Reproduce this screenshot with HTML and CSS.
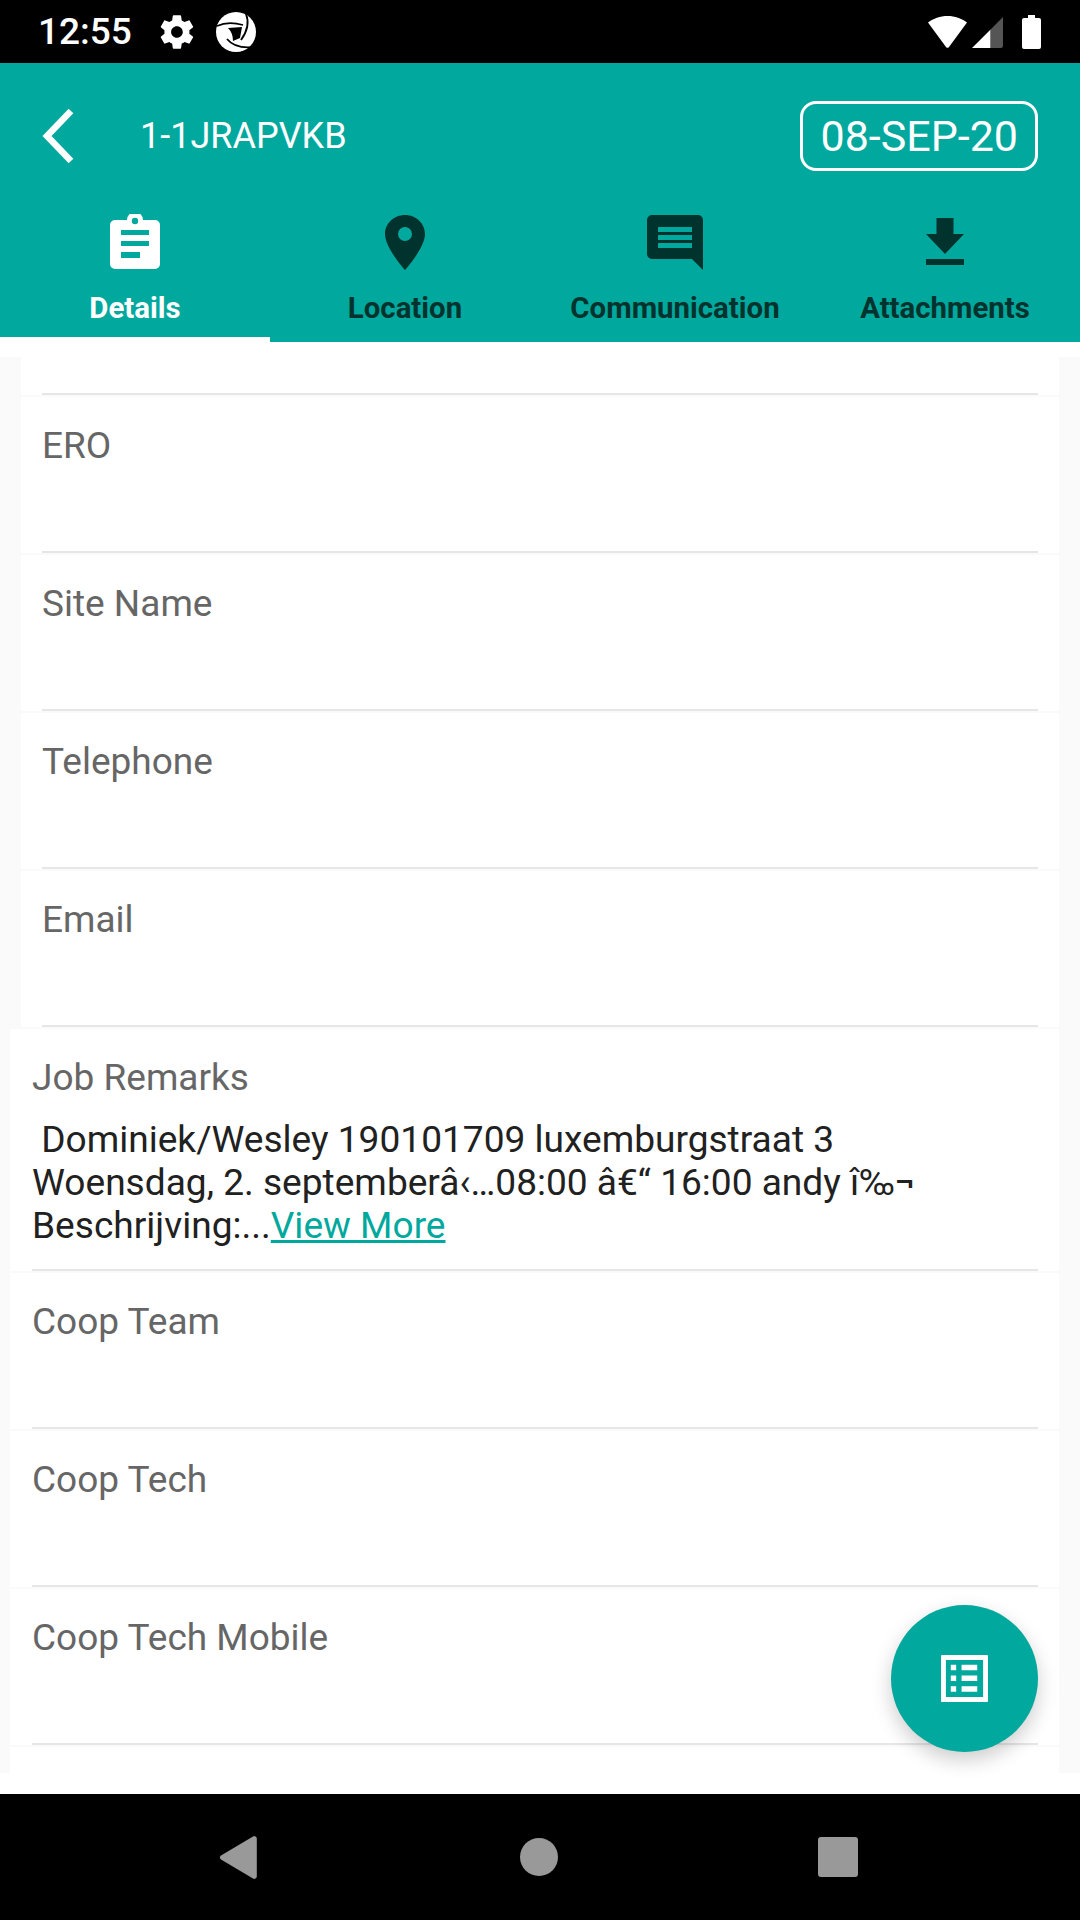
FILE: index.html
```html
<!DOCTYPE html>
<html lang="en">
<head>
  <meta charset="UTF-8" />
  <meta name="viewport" content="width=device-width, initial-scale=1.0"/>
  <title>Job Details</title>
  <link rel="stylesheet" href="styles.css">
</head>
<body>
  <div id="statusbar">
    <span class="clock">12:55</span>
    <svg class="st-gear" viewBox="0 0 24 24"><path fill="#fff" d="M19.4 13c.04-.32.07-.66.07-1s-.03-.68-.07-1l2.1-1.65c.2-.15.25-.42.12-.64l-2-3.46c-.12-.22-.39-.3-.61-.22l-2.49 1c-.52-.4-1.08-.73-1.69-.98l-.38-2.65C14.4 2.17 14.2 2 13.96 2h-4c-.25 0-.45.17-.49.42l-.38 2.65c-.61.25-1.17.59-1.69.98l-2.49-1c-.23-.09-.49 0-.61.22l-2 3.46c-.13.22-.07.49.12.64L4.52 11c-.04.32-.07.65-.07 1s.03.68.07 1l-2.1 1.65c-.2.15-.25.42-.12.64l2 3.46c.12.22.39.3.61.22l2.49-1c.52.4 1.08.73 1.69.98l.38 2.65c.04.25.24.42.49.42h4c.25 0 .45-.17.49-.42l.38-2.65c.61-.25 1.17-.59 1.69-.98l2.49 1c.23.09.49 0 .61-.22l2-3.46c.12-.22.07-.49-.12-.64L19.4 13zM11.96 15.5c-1.93 0-3.5-1.57-3.5-3.5s1.57-3.5 3.5-3.5 3.5 1.57 3.5 3.5-1.57 3.5-3.5 3.5z"/></svg>
    <svg class="st-logo" viewBox="0 0 40 40">
      <circle cx="20" cy="20" r="20" fill="#fff"/>
      <path fill="none" stroke="#000" stroke-width="1.8" d="M1 14 Q12 9 27 13 M30 2 Q35 14 25 28 M11 27 Q19 37 38 35"/>
      <path fill="#000" d="M12 16 L26 15 L24 26 L17 29 Q17 21 12 16 Z"/>
    </svg>
    <span class="st-space"></span>
    <svg class="st-wifi" viewBox="0 0 39 32"><path fill="#fff" d="M19.5 0C12 0 5.500 2.500 0 6.500L18 31a2 2 0 0 0 3 0L39 6.500C33.500 2.500 27 0 19.500 0z"/></svg>
    <svg class="st-signal" viewBox="0 0 30 31">
      <path fill="#fff" d="M0 31 L18 13 V31 Z"/>
      <path fill="#555" d="M18 13 L30 1 V29 a2 2 0 0 1 -2 2 H18 Z"/>
    </svg>
    <svg class="st-batt" viewBox="0 0 19 34"><path fill="#fff" d="M6 0h7v3h4a2 2 0 0 1 2 2v27a2 2 0 0 1-2 2H2a2 2 0 0 1-2-2V5a2 2 0 0 1 2-2h4z"/></svg>
  </div>

  <header id="topbar">
    <div class="title-row">
      <svg class="back" viewBox="0 0 32 56"><path fill="none" stroke="#fff" stroke-width="6.500" d="M29 3 L5 28 L29 53"/></svg>
      <span class="job-id">1-1JRAPVKB</span>
      <span class="date-chip">08-SEP-20</span>
    </div>
    <nav class="tabs">
      <a class="tab active">
        <svg viewBox="0 0 56 56"><path fill="currentColor" fill-rule="evenodd" d="M8 6h12a8 8 0 0 1 16 0h12a5 5 0 0 1 5 5v39a5 5 0 0 1-5 5H8a5 5 0 0 1-5-5V11a5 5 0 0 1 5-5zM28 3.800a3.200 3.200 0 1 0 0 6.400 3.200 3.200 0 0 0 0-6.400zM14 16v5h28v-5zM14 27v5h28v-5zM14 38v6h19v-6z"/></svg>
        <span>Details</span>
      </a>
      <a class="tab">
        <svg viewBox="0 0 56 56"><path fill="currentColor" fill-rule="evenodd" d="M28 1C17 1 8 9.500 8 20c0 14 20 36 20 36s20-22 20-36C48 9.500 39 1 28 1zM28 13a7 7 0 1 1 0 14 7 7 0 0 1 0-14z"/></svg>
        <span>Location</span>
      </a>
      <a class="tab">
        <svg viewBox="0 0 56 56"><path fill="currentColor" fill-rule="evenodd" d="M5 1h46a5 5 0 0 1 5 5v50L45 45H5a5 5 0 0 1-5-5V6a5 5 0 0 1 5-5zM11 13v5h34v-5zM11 21v5h34v-5zM11 29v5h34v-5z"/></svg>
        <span>Communication</span>
      </a>
      <a class="tab">
        <svg viewBox="0 0 56 56"><path fill="currentColor" d="M19.500 4h17v16H47L28 40 9 20h10.500zM9 45h38v6H9z"/></svg>
        <span>Attachments</span>
      </a>
    </nav>
  </header>

  <main id="content">
    <div class="list">
      <div class="row first"><div class="row-in"></div></div>
      <div class="row"><div class="row-in"><div class="lbl">ERO</div></div></div>
      <div class="row"><div class="row-in"><div class="lbl">Site Name</div></div></div>
      <div class="row"><div class="row-in"><div class="lbl">Telephone</div></div></div>
      <div class="row"><div class="row-in"><div class="lbl">Email</div></div></div>
      <div class="row wide remarks"><div class="row-in">
        <div class="lbl">Job Remarks</div>
        <p class="remark-text"> Dominiek/Wesley 190101709 luxemburgstraat 3
Woensdag, 2. septemberâ‹…08:00 â€“ 16:00 andy î‰¬
Beschrijving:...<a href="#">View More</a></p>
      </div></div>
      <div class="row wide"><div class="row-in"><div class="lbl">Coop Team</div></div></div>
      <div class="row wide"><div class="row-in"><div class="lbl">Coop Tech</div></div></div>
      <div class="row wide"><div class="row-in"><div class="lbl">Coop Tech Mobile</div></div></div>
      <div class="row wide tail"></div>
    </div>
    <button class="fab">
      <svg viewBox="0 0 48 48"><path fill="#fff" fill-rule="evenodd" d="M1 0h46a1 1 0 0 1 1 1v46a1 1 0 0 1-1 1H1a1 1 0 0 1-1-1V1a1 1 0 0 1 1-1zM5 5v38h38V5zM10 10h5.500v5.500H10zM21 10h16v5.500H21zM10 21h5.500v5.500H10zM21 21h16v5.500H21zM10 32h5.500v5.500H10zM21 32h16v5.500H21z"/></svg>
    </button>
  </main>

  <div id="navbar">
    <svg class="nav-back" viewBox="0 0 38 43"><path fill="#999" d="M2 23.500a2.500 2.500 0 0 1 0-4L34 .500a2.500 2.500 0 0 1 3.800 2v38a2.500 2.500 0 0 1-3.800 2z"/></svg>
    <span class="nav-home"></span>
    <span class="nav-recent"></span>
  </div>
</body>
</html>
```
FILE: styles.css
```css
/* ---- base ---- */
html, body {
  margin: 0;
  height: 100%;
}

body {
  width: 1080px;
  height: 1920px;
  display: flex;
  flex-direction: column;
  font-family: Roboto, sans-serif;
  background: #fff;
  overflow: hidden;
}

/* ---- status bar ---- */
#statusbar {
  height: 63px;
  background: #000;
  color: #fff;
  display: flex;
  align-items: center;
  padding: 0 39px 0 38px;
  flex-shrink: 0;
}

.clock {
  font-size: 37px;
  font-weight: 500;
  width: 119px;
}

.st-gear { width: 40px; height: 40px; margin-right: 19px; }
.st-logo { width: 40px; height: 40px; }
.st-space { flex: 1; }
.st-wifi { width: 39px; height: 32px; margin-right: 5px; }
.st-signal { width: 31px; height: 32px; margin-right: 19px; }
.st-batt { width: 19px; height: 34px; }

/* ---- teal header ---- */
#topbar {
  height: 279px;
  background: #00a89d;
  color: #fff;
  display: flex;
  flex-direction: column;
  flex-shrink: 0;
}

.title-row {
  display: flex;
  align-items: center;
  height: 146px;
  padding: 0 42px 0 42px;
  flex-shrink: 0;
}

.back { width: 32px; height: 56px; margin-right: 66px; }
.job-id { font-size: 36px; flex: 1; }

.date-chip {
  font-size: 43px;
  border: 3px solid #fff;
  border-radius: 16px;
  padding: 0 17px;
  height: 64px;
  line-height: 64px;
}

.tabs {
  display: flex;
  flex: 1;
}

.tab {
  flex: 1;
  display: flex;
  flex-direction: column;
  align-items: center;
  color: #00332e;
  font-size: 29.4px;
  font-weight: 700;
  padding-top: 5px;
}

.tab svg {
  width: 56px;
  height: 56px;
  margin-bottom: 21px;
}

.tab.active {
  color: #fff;
  border-bottom: 5px solid #fff;
}

/* ---- list ---- */
#content {
  flex: 1;
  position: relative;
  padding: 15px 0 21px;
  min-height: 0;
}

.list {
  height: 100%;
  background: #fafafa;
  overflow: hidden;
}

.row {
  margin: 0 21px;
  padding: 0 21px;
  background: #fff;
  height: 158px;
  box-sizing: border-box;
  border-bottom: 2px solid #fafafa;
}

.row.first { height: 40px; }

.row-in {
  height: 154px;
  border-bottom: 2px solid #e6e6e6;
}

.row.first .row-in { height: 36px; }

.lbl {
  color: #666;
  font-size: 37px;
  padding-top: 29px;
  line-height: 39px;
}

.row.wide {
  margin-left: 10px;
  padding-left: 22px;
}

.row.tail {
  border-bottom: none;
}

.remarks { height: 244px; }
.remarks .row-in { height: 240px; }

.remark-text {
  margin: 21px 0 0;
  color: #212121;
  font-size: 37.1px;
  line-height: 43px;
  white-space: pre-wrap;
}

.remark-text a { color: #00a89d; }

/* ---- floating button ---- */
.fab {
  position: absolute;
  right: 42px;
  top: 1263px;
  width: 147px;
  height: 147px;
  padding: 0;
  border: none;
  border-radius: 50%;
  background: #00a89d;
  box-shadow: 0 8px 20px rgba(0, 0, 0, 0.2);
  display: flex;
  align-items: center;
  justify-content: center;
}

.fab svg { width: 47px; height: 47px; }

/* ---- android nav ---- */
#navbar {
  height: 126px;
  background: #000;
  flex-shrink: 0;
  display: flex;
  align-items: center;
  padding-left: 219px;
}

.nav-back { width: 38px; height: 43px; margin-right: 263px; }
.nav-home { width: 38px; height: 38px; border-radius: 50%; background: #999; margin-right: 260px; }
.nav-recent { width: 40px; height: 40px; border-radius: 3px; background: #999; }
```
